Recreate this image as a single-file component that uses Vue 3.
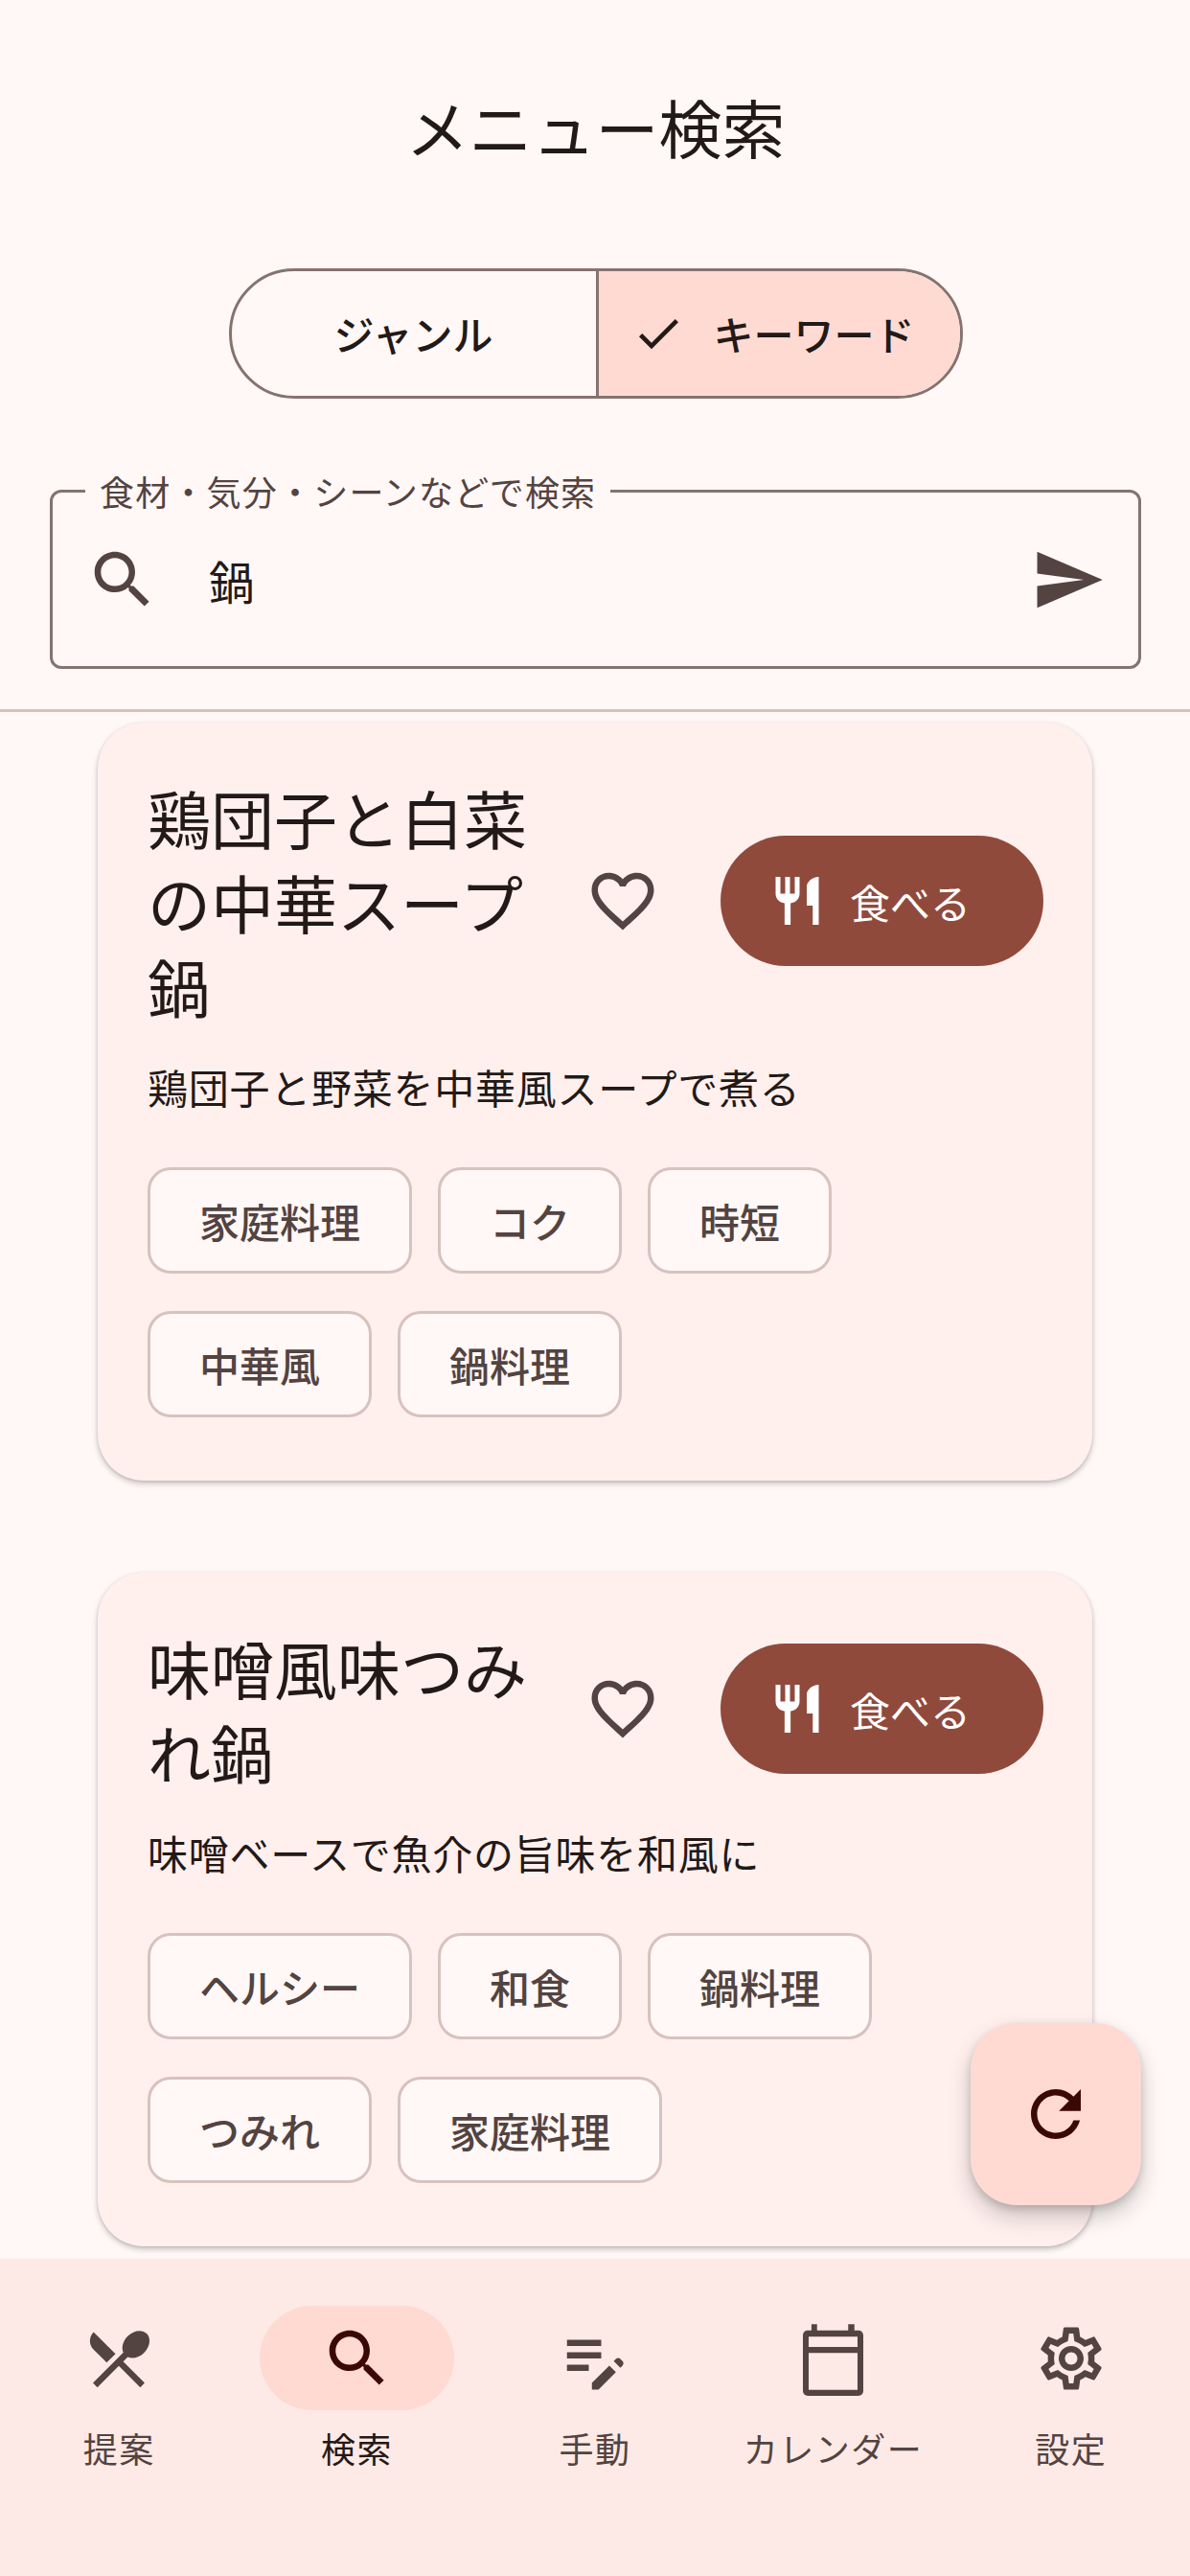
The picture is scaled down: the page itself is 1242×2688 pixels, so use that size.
<script setup>
const icons = {
  search: 'M15.5 14h-.79l-.28-.27C15.41 12.59 16 11.11 16 9.5 16 5.91 13.09 3 9.5 3S3 5.91 3 9.5 5.91 16 9.5 16c1.61 0 3.09-.59 4.23-1.57l.27.28v.79l5 4.99L20.49 19l-4.99-5zm-6 0C7.01 14 5 11.99 5 9.5S7.01 5 9.5 5 14 7.01 14 9.5 11.99 14 9.5 14z',
  send: 'M2.01 21 23 12 2.01 3 2 10l15 2-15 2z',
  check: 'M9 16.17 4.83 12l-1.41 1.41L9 19 21 7l-1.41-1.41z',
  heart: 'M16.5 3c-1.74 0-3.41.81-4.5 2.09C10.91 3.81 9.24 3 7.5 3 4.42 3 2 5.42 2 8.5c0 3.78 3.4 6.86 8.55 11.54L12 21.35l1.45-1.32C18.6 15.36 22 12.28 22 8.5 22 5.42 19.58 3 16.5 3zm-4.4 15.55-.1.1-.1-.1C7.14 14.24 4 11.39 4 8.5 4 6.5 5.5 5 7.5 5c1.54 0 3.04.99 3.57 2.36h1.87C13.46 5.99 14.96 5 16.5 5c2 0 3.5 1.5 3.5 3.5 0 2.89-3.14 5.74-7.9 10.05z',
  eat: 'M11 9H9V2H7v7H5V2H3v7c0 2.12 1.66 3.84 3.75 3.97V22h2.5v-9.03C11.34 12.84 13 11.12 13 9V2h-2v7zm5-3v8h2.5v8H21V2c-2.76 0-5 2.24-5 4z',
  refresh: 'M17.65 6.35C16.2 4.9 14.21 4 12 4c-4.42 0-7.99 3.58-7.99 8s3.57 8 7.99 8c3.73 0 6.84-2.55 7.73-6h-2.08c-.82 2.33-3.04 4-5.65 4-3.31 0-6-2.69-6-6s2.69-6 6-6c1.66 0 3.14.69 4.22 1.78L13 11h7V4l-2.35 2.35z',
  menu: 'M8.1 13.34l2.83-2.83L3.91 3.5c-1.56 1.56-1.56 4.09 0 5.66l4.19 4.18zm6.78-1.81c1.53.71 3.68.21 5.27-1.38 1.91-1.91 2.28-4.65.81-6.12-1.46-1.46-4.2-1.1-6.12.81-1.59 1.59-2.09 3.74-1.38 5.27L3.7 19.87l1.41 1.41L12 14.41l6.88 6.88 1.41-1.41L13.41 13l1.47-1.47z',
  note: 'M3 10h11v2H3zM3 6h11v2H3zM3 14h7v2H3zM18.01 12.87l.71-.71c.39-.39 1.02-.39 1.41 0l.71.71c.39.39.39 1.02 0 1.41l-.71.71zM16.6 14.28 11 19.88V22h2.12l5.6-5.6z',
  calendar: 'M20 3h-1V1h-2v2H7V1H5.2v2H4c-.9 0-1.54.7-1.54 1.6v17.8c0 .9.7 1.6 1.6 1.6H20.3c.9 0 1.55-.7 1.55-1.6V4.6C21.85 3.7 21.2 3 20.3 3zm0 2v3.3H4.3V5zM4.3 22.1V10.2H20v11.9z',
  settings: 'M19.43 12.98c.04-.32.07-.64.07-.98 0-.34-.03-.66-.07-.98l2.11-1.65c.19-.15.24-.42.12-.64l-2-3.46c-.09-.16-.26-.25-.44-.25-.06 0-.12.01-.17.03l-2.49 1c-.52-.4-1.08-.73-1.69-.98l-.38-2.65C14.46 2.18 14.25 2 14 2h-4c-.25 0-.46.18-.49.42l-.38 2.65c-.61.25-1.17.59-1.69.98l-2.49-1c-.06-.02-.12-.03-.18-.03-.17 0-.34.09-.43.25l-2 3.46c-.13.22-.07.49.12.64l2.11 1.65c-.04.32-.07.65-.07.98 0 .33.03.66.07.98l-2.11 1.65c-.19.15-.24.42-.12.64l2 3.46c.09.16.26.25.44.25.06 0 .12-.01.17-.03l2.49-1c.52.4 1.08.73 1.69.98l.38 2.65c.03.24.24.42.49.42h4c.25 0 .46-.18.49-.42l.38-2.65c.61-.25 1.17-.59 1.69-.98l2.49 1c.06.02.12.03.18.03.17 0 .34-.09.43-.25l2-3.46c.12-.22.07-.49-.12-.64l-2.11-1.65zm-1.98-1.71c.04.31.05.52.05.73 0 .21-.02.43-.05.73l-.14 1.13.89.7 1.08.84-.7 1.21-1.27-.51-1.04-.42-.9.68c-.43.32-.84.56-1.25.73l-1.06.43-.16 1.13-.2 1.35h-1.4l-.19-1.35-.16-1.13-1.06-.43c-.43-.18-.83-.41-1.23-.71l-.91-.7-1.06.43-1.27.51-.7-1.21 1.08-.84.89-.7-.14-1.13c-.03-.31-.05-.54-.05-.74s.02-.43.05-.73l.14-1.13-.89-.7-1.08-.84.7-1.21 1.27.51 1.04.42.9-.68c.43-.32.84-.56 1.25-.73l1.06-.43.16-1.13.2-1.35h1.39l.19 1.35.16 1.13 1.06.43c.43.18.83.41 1.23.71l.91.7 1.06-.43 1.27-.51.7 1.21-1.07.85-.89.7.14 1.13zM12 8c-2.21 0-4 1.79-4 4s1.79 4 4 4 4-1.79 4-4-1.79-4-4-4zm0 6c-1.1 0-2-.9-2-2s.9-2 2-2 2 .9 2 2-.9 2-2 2z',
}

const recipes = [
  {
    name: '鶏団子と白菜の中華スープ鍋',
    desc: '鶏団子と野菜を中華風スープで煮る',
    tags: ['家庭料理', 'コク', '時短', '中華風', '鍋料理'],
  },
  {
    name: '味噌風味つみれ鍋',
    desc: '味噌ベースで魚介の旨味を和風に',
    tags: ['ヘルシー', '和食', '鍋料理', 'つみれ', '家庭料理'],
  },
]

const tabs = [
  { label: '提案', icon: icons.menu },
  { label: '検索', icon: icons.search, active: true },
  { label: '手動', icon: icons.note },
  { label: 'カレンダー', icon: icons.calendar },
  { label: '設定', icon: icons.settings },
]
</script>

<template>
  <div class="screen" lang="ja">
    <header class="top">
      <h1 class="page-title">メニュー検索</h1>

      <div class="segments">
        <button class="segment">ジャンル</button>
        <button class="segment selected">
          <svg class="check" viewBox="0 0 24 24"><path :d="icons.check" /></svg>
          キーワード
        </button>
      </div>

      <div class="field">
        <span class="field-label">食材・気分・シーンなどで検索</span>
        <svg class="icon" viewBox="0 0 24 24"><path :d="icons.search" /></svg>
        <span class="field-value">鍋</span>
        <svg class="icon" viewBox="0 0 24 24"><path :d="icons.send" /></svg>
      </div>
    </header>

    <main class="results">
      <article v-for="r in recipes" :key="r.name" class="card">
        <div class="card-head">
          <h2 class="card-title">{{ r.name }}</h2>
          <span class="fav">
            <svg class="icon" viewBox="0 0 24 24"><path :d="icons.heart" /></svg>
          </span>
          <button class="eat">
            <svg class="eat-icon" viewBox="0 0 24 24"><path :d="icons.eat" /></svg>
            食べる
          </button>
        </div>
        <p class="card-desc">{{ r.desc }}</p>
        <div class="tags">
          <span v-for="t in r.tags" :key="t" class="tag">{{ t }}</span>
        </div>
      </article>
    </main>

    <button class="fab">
      <svg class="icon" viewBox="0 0 24 24"><path :d="icons.refresh" /></svg>
    </button>

    <nav class="tabbar">
      <div v-for="t in tabs" :key="t.label" class="tab" :class="{ active: t.active }">
        <span class="tab-pill">
          <svg class="icon" viewBox="0 0 24 24"><path :d="t.icon" /></svg>
        </span>
        <span class="tab-label">{{ t.label }}</span>
      </div>
    </nav>
  </div>
</template>

<style>
html, body { margin: 0; background: #fff8f6; }
</style>

<style scoped>
.screen {
  position: relative;
  width: 1242px;
  height: 2688px;
  display: flex;
  flex-direction: column;
  overflow: hidden;
  background: #fff8f6;
  color: #231917;
  font-family: "Noto Sans CJK JP", "Noto Sans", sans-serif;
}
button { font-family: inherit; border: 0; padding: 0; margin: 0; }

/* header block */
.top {
  flex: none;
  height: 743px;
  padding: 89px 51px 0 52px;
  box-sizing: border-box;
  border-bottom: 3px solid #d8c2bd;
}
.page-title {
  margin: 0;
  text-align: center;
  font-size: 66px;
  line-height: 84px;
  font-weight: 400;
}
.segments {
  display: flex;
  width: 766px;
  height: 136px;
  margin: 107px auto 0;
  box-sizing: border-box;
  border: 3px solid #857370;
  border-radius: 68px;
  overflow: hidden;
}
.segment {
  flex: none;
  width: 50%;
  display: flex;
  align-items: center;
  justify-content: center;
  box-sizing: border-box;
  background: transparent;
  color: #231917;
  font-size: 42px;
  font-weight: 500;
  line-height: 60px;
}
.segment.selected {
  background: #ffdad2;
  border-left: 3px solid #857370;
  padding-right: 12px;
}
.check { width: 56px; height: 56px; margin-right: 29px; fill: #231917; }

.field {
  position: relative;
  display: flex;
  align-items: center;
  height: 187px;
  margin-top: 95px;
  padding: 0 34px;
  box-sizing: border-box;
  border: 3px solid #857370;
  border-radius: 12px;
}
.field-label {
  position: absolute;
  top: -24px;
  left: 34px;
  padding: 0 15px;
  background: #fff8f6;
  color: #534341;
  font-size: 36px;
  line-height: 44px;
  letter-spacing: 1.2px;
}
.field-value {
  flex: 1;
  margin-left: 51px;
  font-size: 48px;
  line-height: 64px;
}
.icon { display: block; flex: none; width: 78px; height: 78px; fill: #534341; }

/* recipe list */
.results {
  flex: 1;
  min-height: 0;
  padding: 11px 102px 0;
  display: flex;
  flex-direction: column;
  gap: 96px;
}
.card {
  flex: none;
  padding: 54px 51px 66px 52px;
  background: #fff0ee;
  border-radius: 48px;
  box-shadow: 0 3px 6px rgba(0, 0, 0, .22), 0 1px 3px rgba(0, 0, 0, .1);
}
.card-head { display: flex; align-items: center; }
.card-title {
  flex: 1;
  min-width: 0;
  margin: 0;
  font-size: 66px;
  line-height: 88px;
  font-weight: 400;
}
.fav {
  flex: none;
  width: 144px;
  height: 144px;
  display: flex;
  align-items: center;
  justify-content: center;
  margin-right: 30px;
}
.eat {
  flex: none;
  width: 337px;
  height: 136px;
  padding-left: 50px;
  display: flex;
  align-items: center;
  border-radius: 68px;
  background: #904a3c;
  color: #fff;
  font-size: 42px;
  font-weight: 400;
}
.eat-icon { width: 60px; height: 60px; margin-right: 25px; fill: #fff; }
.card-desc {
  margin: 32px 0 54px;
  font-size: 42px;
  line-height: 60px;
  letter-spacing: .75px;
}
.tags { display: flex; flex-wrap: wrap; gap: 39px 27px; }
.tag {
  height: 111px;
  padding: 0 51px;
  display: flex;
  align-items: center;
  box-sizing: border-box;
  border: 3px solid #d8c2bd;
  border-radius: 24px;
  background: #fff8f6;
  color: #534341;
  font-size: 42px;
  font-weight: 500;
}

/* floating refresh action */
.fab {
  position: absolute;
  top: 2111px;
  left: 1013px;
  width: 178px;
  height: 190px;
  display: flex;
  align-items: center;
  justify-content: center;
  border-radius: 48px;
  background: #ffdad2;
  box-shadow: 0 12px 24px rgba(0, 0, 0, .2), 0 4px 8px rgba(0, 0, 0, .15);
}
.fab .icon { fill: #3b0905; }

/* bottom navigation */
.tabbar {
  position: relative;
  flex: none;
  height: 331px;
  display: grid;
  grid-template-columns: repeat(5, 1fr);
  align-items: start;
  padding-top: 49px;
  box-sizing: border-box;
  background: #fdeae6;
}
.tab {
  display: flex;
  flex-direction: column;
  align-items: center;
}
.tab-pill {
  width: 203px;
  height: 109px;
  display: flex;
  align-items: center;
  justify-content: center;
  border-radius: 55px;
}
.tab-label {
  margin-top: 17px;
  color: #534341;
  font-size: 36px;
  line-height: 44px;
  font-weight: 400;
  letter-spacing: 1.5px;
  white-space: nowrap;
}
.active .tab-pill { background: #ffdad2; }
.active .icon { fill: #3b0905; }
.active .tab-label { color: #231917; }
</style>
